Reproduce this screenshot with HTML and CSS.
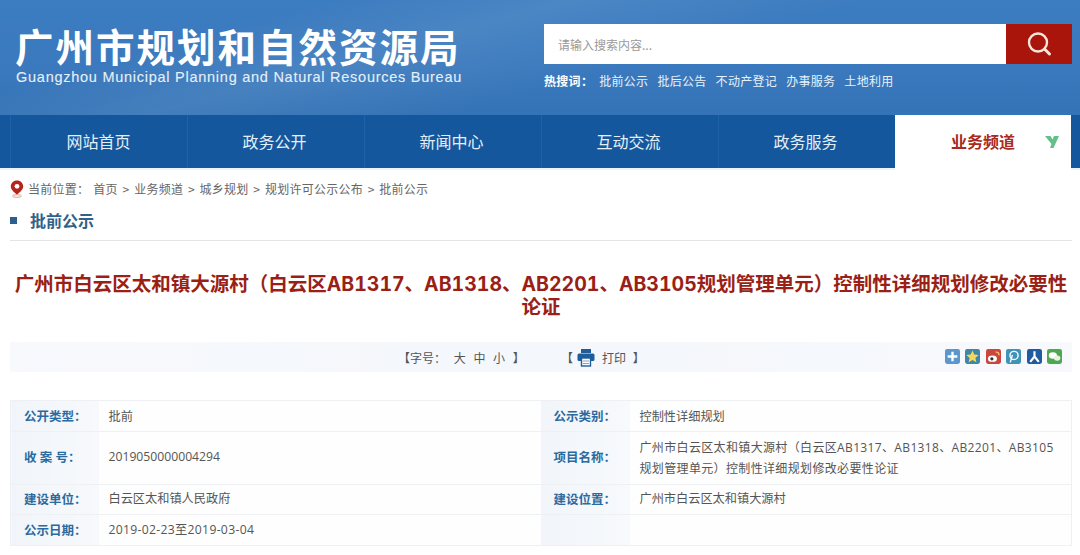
FILE: index.html
```html
<!DOCTYPE html>
<html lang="zh-CN">
<head>
<meta charset="utf-8">
<title>批前公示</title>
<link rel="stylesheet" href="styles.css">
</head>
<body>
<header class="banner">
  <div class="brand">
    <div class="brand-cn">广州市规划和自然资源局</div>
    <div class="brand-en">Guangzhou Municipal Planning and Natural Resources Bureau</div>
  </div>
  <div class="search-area">
    <div class="search">
      <div class="search-input">请输入搜索内容...</div>
      <div class="search-btn">
        <svg width="28" height="28" viewBox="0 0 28 28"><circle cx="13" cy="12.5" r="9" fill="none" stroke="#f8e6dc" stroke-width="2.4"/><path d="M19.5 19l5 5" stroke="#f8e6dc" stroke-width="3" stroke-linecap="round"/></svg>
      </div>
    </div>
    <div class="hot">
      <b class="hot-label">热搜词：</b><span>批前公示</span><span>批后公告</span><span>不动产登记</span><span>办事服务</span><span>土地利用</span>
    </div>
  </div>
</header>
<nav class="nav">
  <a class="nav-item">网站首页</a>
  <a class="nav-item">政务公开</a>
  <a class="nav-item">新闻中心</a>
  <a class="nav-item">互动交流</a>
  <a class="nav-item">政务服务</a>
  <a class="nav-item nav-active">业务频道
    <svg class="nav-arrow" width="14" height="12" viewBox="0 0 14 12"><path d="M0 0h5.500L7.500 3.500 9 0h5L8.500 12H5l1.500-4z" fill="#62c088"/></svg>
  </a>
</nav>
<main class="main">
  <div class="crumb">
    <svg width="14" height="18" viewBox="0 0 14 18"><path d="M7 0.500C3.300 0.500 0.800 3.200 0.800 6.500 0.800 10 5 12.500 7 15 9 12.500 13.200 10 13.200 6.500 13.200 3.200 10.700 0.500 7 0.500z" fill="#b3261c"/><circle cx="7" cy="6.300" r="2.400" fill="#fff"/><ellipse cx="7" cy="16" rx="4.500" ry="1.300" fill="none" stroke="#d9a08f"/></svg>
    <span>当前位置：</span><span class="crumb-path">首页 &gt; 业务频道 &gt; 城乡规划 &gt; 规划许可公示公布 &gt; 批前公示</span>
  </div>
  <h2 class="section"><i class="section-mark"></i>批前公示</h2>
  <h1 class="title">广州市白云区太和镇大源村（白云区AB1317、AB1318、AB2201、AB3105规划管理单元）控制性详细规划修改必要性论证</h1>
  <div class="tools">
    <div class="tools-center">
      <span class="font-size">【字号： 大 中 小 】</span>
      <span class="print">【
        <svg class="print-icon" width="18" height="19" viewBox="0 0 18 19"><rect x="4" y="1" width="10" height="4" fill="#1f5f99"/><rect x="0.500" y="5.500" width="17" height="7.500" rx="1.500" fill="#1f5f99"/><rect x="4.500" y="10" width="9" height="8" fill="#fff" stroke="#1f5f99" stroke-width="1.400"/><path d="M6 13h6M6 15.500h6" stroke="#7fa6c7"/></svg>
        打印 】</span>
    </div>
    <div class="share">
      <svg class="share-icon" viewBox="0 0 14 14"><rect width="14" height="14" rx="2" fill="#5b96cc"/><path d="M7 2.500v9M2.500 7h9" stroke="#fff" stroke-width="2.200"/></svg>
      <svg class="share-icon" viewBox="0 0 14 14"><rect width="14" height="14" rx="2" fill="#3f86a8"/><path d="M7 1.500l1.700 3.700 4 .4-3 2.700.9 4L7 10.300l-3.600 2 .9-4-3-2.700 4-.4z" fill="#f3d85c"/></svg>
      <svg class="share-icon" viewBox="0 0 14 14"><rect width="14" height="14" rx="2" fill="#c9473f"/><ellipse cx="6" cy="9" rx="4.200" ry="3" fill="#fff"/><circle cx="5.500" cy="9.200" r="1.500" fill="#33302f"/><path d="M9 3c2-.500 3.500 1 3 3" stroke="#f5c26b" fill="none" stroke-width="1.300"/></svg>
      <svg class="share-icon" viewBox="0 0 14 14"><rect width="14" height="14" rx="2" fill="#3d93b8"/><circle cx="7.500" cy="6" r="3.800" fill="none" stroke="#fff" stroke-width="1.300"/><path d="M6 5.500L4 12.500" stroke="#fff" stroke-width="1.300"/></svg>
      <svg class="share-icon" viewBox="0 0 14 14"><rect width="14" height="14" rx="2" fill="#1e5c9f"/><path d="M7 2v5M7 7L3 12M7 7l4 5" stroke="#fff" stroke-width="2" fill="none"/></svg>
      <svg class="share-icon" viewBox="0 0 14 14"><rect width="14" height="14" rx="2" fill="#4fa84f"/><ellipse cx="5.500" cy="6" rx="3.800" ry="3" fill="#fff"/><ellipse cx="9.500" cy="8.500" rx="3" ry="2.400" fill="#e6f4e2"/></svg>
    </div>
  </div>
  <table class="info">
    <colgroup><col class="c-label-a"><col class="c-val-a"><col class="c-label-b"><col></colgroup>
    <tr class="r1">
      <th>公开类型：</th><td>批前</td>
      <th>公示类别：</th><td>控制性详细规划</td>
    </tr>
    <tr class="r2">
      <th>收 案 号：</th><td>2019050000004294</td>
      <th>项目名称：</th><td class="multi">广州市白云区太和镇大源村（白云区AB1317、AB1318、AB2201、AB3105规划管理单元）控制性详细规划修改必要性论证</td>
    </tr>
    <tr class="r3">
      <th>建设单位：</th><td>白云区太和镇人民政府</td>
      <th>建设位置：</th><td>广州市白云区太和镇大源村</td>
    </tr>
    <tr class="r4">
      <th>公示日期：</th><td class="date">2019-02-23至2019-03-04</td>
      <th></th><td></td>
    </tr>
  </table>
</main>
</body>
</html>
```
FILE: styles.css
```css
* { box-sizing: border-box; }
html, body { margin: 0; padding: 0; }
body {
  width: 1080px;
  height: 555px;
  overflow: hidden;
  background: #fff;
  font-family: "Noto Sans CJK SC", "Liberation Sans", sans-serif;
  color: #555;
  font-size: 12px;
}
.banner {
  height: 115px;
  display: flex;
  justify-content: space-between;
  padding: 24px 8px 0 15px;
  background:
    linear-gradient(165deg, rgba(255,255,255,0) 22%, rgba(255,255,255,.08) 38%, rgba(255,255,255,0) 58%),
    linear-gradient(180deg, #3c7cc0 0%, #3a79bd 60%, #3473b6 100%);
}
.brand { color: #fff; }
.brand-cn {
  font-size: 38.500px;
  line-height: 42px;
  font-weight: 700;
  letter-spacing: 2px;
  white-space: nowrap;
}
.brand-en {
  margin-top: 3px;
  margin-left: 1px;
  font-family: "Liberation Sans", sans-serif;
  font-size: 14.500px;
  line-height: 16px;
  letter-spacing: .74px;
  -webkit-text-stroke: .1px #e6f0f8;
  color: #e6f0f8;
  white-space: nowrap;
}
.search-area { width: 528px; }
.search { display: flex; height: 40px; }
.search-input {
  flex: 1;
  background: #fff;
  color: #999;
  font-size: 12px;
  line-height: 42px;
  padding-left: 14px;
}
.search-btn {
  width: 66px;
  background: #a9150a;
  display: flex;
  align-items: center;
  justify-content: center;
}
.hot {
  display: flex;
  margin-top: 8px;
  font-size: 12px;
  line-height: 18px;
  letter-spacing: .3px;
  color: #e8f1f9;
  gap: 9px;
}
.hot-label { color: #fff; margin-right: -3px; }
.nav {
  height: 55px;
  display: flex;
  padding-left: 10px;
  background: #15579d;
  border-bottom: 2px solid #e6f6fb;
}
.nav-item {
  position: relative;
  width: 177px;
  height: 53px;
  display: flex;
  align-items: center;
  justify-content: center;
  padding: 0 3px 2px 0;
  color: #e4f0f8;
  font-size: 16px;
  border-left: 1px solid #1c63aa;
}
.nav-item:first-child { padding-right: 1px; }
.nav-active {
  width: 176px;
  height: 55px;
  padding: 0 0 3px;
  background: #fff;
  border-left: 0;
  color: #a82a20;
  font-weight: 700;
}
.nav-arrow { position: absolute; right: 12px; top: 21px; }
.main { padding: 0 8px 0 10px; }
.crumb {
  height: 28px;
  display: flex;
  align-items: center;
  gap: 4px;
  padding-top: 9px;
  letter-spacing: .25px;
  color: #666;
}
.crumb-path { margin-left: 0; word-spacing: 1.800px; }
.section {
  margin: 0;
  height: 43px;
  padding-top: 10px;
  font-size: 16px;
  line-height: 24px;
  font-weight: 700;
  color: #2f6289;
  display: flex;
  border-bottom: 1px solid #e4e4e4;
}
.section-mark {
  width: 7px;
  height: 7px;
  margin: 9px 13px 0 0;
  background: #2a5f8f;
}
.title {
  margin: 32px 0 0;
  padding: 0 3px;
  font-family: Inter, "Noto Sans CJK SC", sans-serif;
  font-size: 19.500px;
  font-variant-numeric: tabular-nums;
  line-height: 23px;
  font-weight: 700;
  color: #9a1f16;
  text-align: center;
}
.tools {
  position: relative;
  height: 30px;
  margin-top: 23px;
  background: linear-gradient(90deg, #f7f9fd, #f4f7fb 50%, #f7f9fd);
  display: flex;
  align-items: center;
}
.tools-center {
  display: flex;
  align-items: center;
  margin-left: 388px;
  color: #555;
}
.font-size { width: 163px; word-spacing: 5px; }
.print { display: flex; align-items: center; gap: 3px; word-spacing: 4px; }
.print-icon { margin: 0 4px 0 1px; }
.share {
  position: absolute;
  right: 10px;
  top: 7px;
  display: flex;
  gap: 5.500px;
}
.share-icon { width: 15px; height: 15px; display: block; }
.info {
  width: 1062px;
  margin-top: 28px;
  table-layout: fixed;
  border-collapse: collapse;
  border: 1px solid #eef0f3;
  font-family: "Open Sans", "Noto Sans CJK SC", sans-serif;
}
.c-label-a { width: 88px; }
.c-val-a { width: 442px; }
.c-label-b { width: 89px; }
.info th {
  padding: 0 0 1px 13px;
  background: linear-gradient(90deg, #f1f5f9, #f7f9fc);
  color: #2b6a9f;
  font-weight: 700;
  font-size: 12.500px;
  text-align: left;
}
.info td {
  padding: 0 10px;
  background: #fefefe;
  color: #555;
  font-size: 12.200px;
  line-height: 21px;
}
.info .date { letter-spacing: .3px; }
.info .multi { padding: 0 8px 1px 10px; font-size: 12px; letter-spacing: .35px; }
.info tr + tr th, .info tr + tr td { border-top: 1px solid #eef0f3; }
.r1 { height: 31px; }
.r2 { height: 53px; }
.r3 { height: 30px; }
.r4 { height: 31px; }
.info .r2 th, .info .r2 td:not(.multi) { padding-bottom: 3px; }
.info .r3 th, .info .r3 td { padding-bottom: 2px; }
.info .r4 td { padding-bottom: 1px; }
```
